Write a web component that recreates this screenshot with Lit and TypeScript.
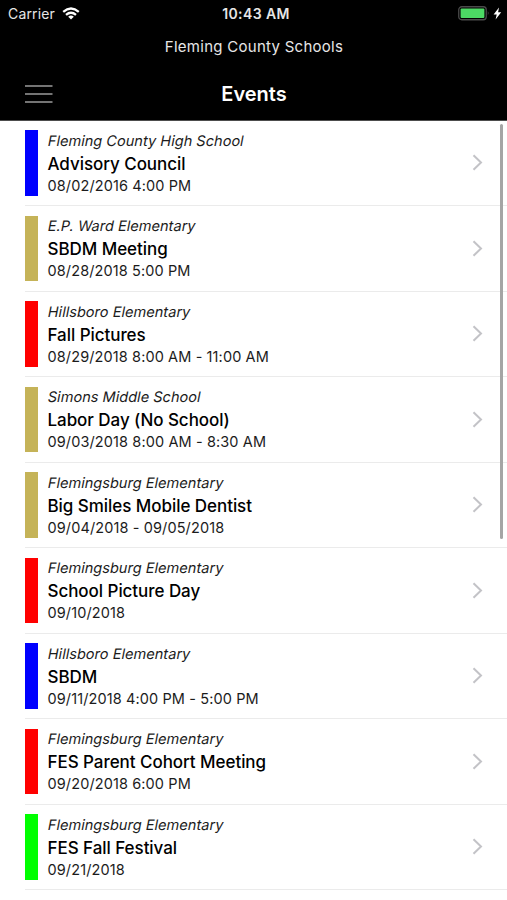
import { LitElement, html, css } from "lit";
import { customElement } from "lit/decorators.js";
import { styleMap } from "lit/directives/style-map.js";

interface SchoolEvent {
  school: string;
  title: string;
  when: string;
  color: string;
}

const BLUE = "#0000ff";
const GOLD = "#c5b358";
const RED = "#ff0000";
const GREEN = "#00ff00";

const EVENTS: SchoolEvent[] = [
  { school: "Fleming County High School", title: "Advisory Council", when: "08/02/2016 4:00 PM", color: BLUE },
  { school: "E.P. Ward Elementary", title: "SBDM Meeting", when: "08/28/2018 5:00 PM", color: GOLD },
  { school: "Hillsboro Elementary", title: "Fall Pictures", when: "08/29/2018 8:00 AM - 11:00 AM", color: RED },
  { school: "Simons Middle School", title: "Labor Day (No School)", when: "09/03/2018 8:00 AM - 8:30 AM", color: GOLD },
  { school: "Flemingsburg Elementary", title: "Big Smiles Mobile Dentist", when: "09/04/2018 - 09/05/2018", color: GOLD },
  { school: "Flemingsburg Elementary", title: "School Picture Day", when: "09/10/2018", color: RED },
  { school: "Hillsboro Elementary", title: "SBDM", when: "09/11/2018 4:00 PM - 5:00 PM", color: BLUE },
  { school: "Flemingsburg Elementary", title: "FES Parent Cohort Meeting", when: "09/20/2018 6:00 PM", color: RED },
  { school: "Flemingsburg Elementary", title: "FES Fall Festival", when: "09/21/2018", color: GREEN },
];

@customElement("status-bar")
export class StatusBar extends LitElement {
  static styles = css`
    :host {
      display: grid;
      grid-template-columns: 1fr auto 1fr;
      align-items: center;
      height: 28px;
      padding: 0 5px 0 8px;
      color: #e6e6e6;
      font-size: 14px;
      line-height: 28px;
    }
    .carrier {
      display: flex;
      align-items: center;
      gap: 7px;
      letter-spacing: 0.15px;
    }
    .carrier svg {
      margin-bottom: 2px;
    }
    .time {
      margin-left: 2px;
      font-weight: 600;
      letter-spacing: 0.4px;
    }
    .power {
      display: flex;
      align-items: center;
      justify-content: flex-end;
      gap: 3px;
    }
    .power svg {
      margin-bottom: 2px;
    }
    svg {
      display: block;
    }
  `;

  render() {
    return html`
      <div class="carrier">
        <span>Carrier</span>
        <svg width="18" height="13" viewBox="0 0 18 13" fill="none" stroke="#fff" stroke-width="2.3">
          <path d="M1.2 4.8 Q9 -1.8 16.8 4.8" />
          <path d="M4 7.9 Q9 3.7 14 7.9" />
          <path d="M9 12.6 L6.2 9.7 Q9 7.5 11.8 9.7 Z" fill="#fff" stroke="none" />
        </svg>
      </div>
      <div class="time">10:43 AM</div>
      <div class="power">
        <svg width="32" height="15" viewBox="0 0 32 15">
          <rect x="0.75" y="0.75" width="27.5" height="13" rx="3" fill="none" stroke="#4a4a4a" stroke-width="1.3" />
          <rect x="2.6" y="2.6" width="23.8" height="9.3" rx="1" fill="#4cd964" />
          <path d="M29.8 5 Q31.6 7.2 29.8 9.5 Z" fill="#4a4a4a" />
        </svg>
        <svg width="9" height="13" viewBox="0 0 9 13">
          <path d="M6 0.5 L0.6 7.4 H3.7 L2.6 12.5 L8.2 5.3 H5.1 Z" fill="#fff" />
        </svg>
      </div>
    `;
  }
}

@customElement("event-row")
export class EventRow extends LitElement {
  static properties = { event: { attribute: false } };
  declare event: SchoolEvent;

  static styles = css`
    :host {
      display: flex;
      box-sizing: border-box;
      height: 85.5px;
      margin-left: 25px;
      padding: 9.5px 24px 0 0;
      border-bottom: 1px solid #ebebeb;
    }
    .tag {
      flex: none;
      width: 13px;
      height: 65.5px;
      margin-right: 9.5px;
    }
    .text {
      flex: 1;
      padding-top: 0.3px;
      white-space: nowrap;
      color: #1c1c1c;
    }
    /* Slanted upright letters keep the double-storey "a". */
    .school {
      font-size: 14.5px;
      line-height: 20px;
      letter-spacing: 0.04px;
      transform: skewX(-11deg);
    }
    .title {
      font-size: 17px;
      font-weight: 500;
      line-height: 26px;
      letter-spacing: -0.05px;
      color: #000;
    }
    .when {
      font-size: 14.5px;
      line-height: 18px;
      letter-spacing: 0.11px;
    }
    .chevron {
      display: block;
      flex: none;
      align-self: flex-start;
      margin-top: 24px;
    }
  `;

  render() {
    const { school, title, when, color } = this.event;
    return html`
      <div class="tag" style=${styleMap({ background: color })}></div>
      <div class="text">
        <div class="school">${school}</div>
        <div class="title">${title}</div>
        <div class="when">${when}</div>
      </div>
      <svg class="chevron" width="11" height="17" viewBox="0 0 11 17" fill="none" stroke="#c3c3c7" stroke-width="2">
        <path d="M1.5 1.2 L9 8.5 L1.5 15.8" />
      </svg>
    `;
  }
}

@customElement("app-root")
export class AppRoot extends LitElement {
  static styles = css`
    :host {
      display: block;
      position: relative;
      height: 900px;
      overflow: hidden;
      background: #fff;
      font-family: Inter, "Liberation Sans", sans-serif;
    }
    header {
      box-sizing: border-box;
      height: 120.8px;
      background: #000;
      border-bottom: 1px solid #4d4d4d;
    }
    .district {
      height: 38px;
      line-height: 38px;
      padding-left: 1px;
      text-align: center;
      color: #e6e6e6;
      font-size: 15px;
      letter-spacing: 0.27px;
    }
    .bar {
      display: grid;
      grid-template-columns: 1fr auto 1fr;
      align-items: center;
      height: 55px;
      padding: 0 25px;
    }
    h1 {
      margin: 2px 0 0 1px;
      color: #fff;
      font-size: 20px;
      font-weight: 570;
      line-height: 53px;
    }
    .menu {
      display: block;
    }
    .scroll {
      position: absolute;
      top: 124px;
      right: 4px;
      width: 3px;
      height: 415px;
      border-radius: 2px;
      background: #a5a5a5;
    }
  `;

  render() {
    return html`
      <header>
        <status-bar></status-bar>
        <div class="district">Fleming County Schools</div>
        <div class="bar">
          <svg class="menu" width="28" height="20" viewBox="0 0 28 20" stroke="#9a9a9a" stroke-width="1.7">
            <path d="M0 2 H27.5 M0 10 H27.5 M0 18 H27.5" />
          </svg>
          <h1>Events</h1>
        </div>
      </header>
      <main>${EVENTS.map((event) => html`<event-row .event=${event}></event-row>`)}</main>
      <div class="scroll"></div>
    `;
  }
}
